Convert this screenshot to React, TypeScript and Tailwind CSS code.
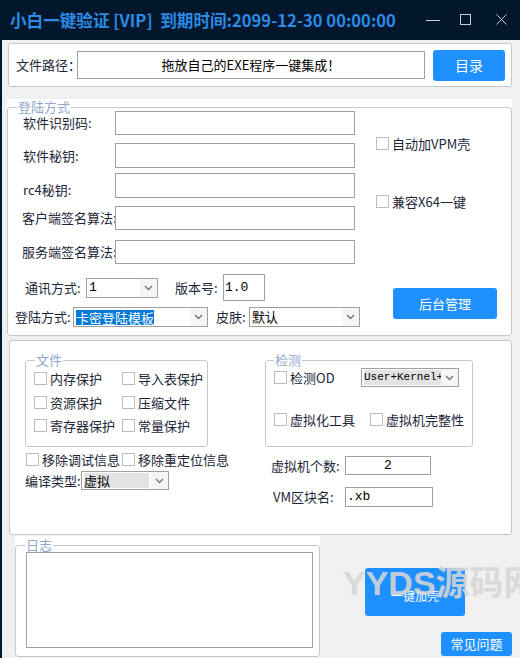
import type { ReactNode } from "react";

const cjk = { fontFamily: '"Noto Sans CJK SC", "Noto Sans", sans-serif' };
const mono = { fontFamily: '"Liberation Mono", "Noto Sans CJK SC", monospace' };

function Check({ label, className = "" }: { label: string; className?: string }) {
  return (
    <div className={`flex items-center ${className}`}>
      <span className="h-[13px] w-[13px] shrink-0 border border-[#bcbcbc] bg-white" />
      <span className="ml-[3px] whitespace-nowrap text-[13px] leading-[15px] text-[#1c2638]">{label}</span>
    </div>
  );
}

function Chevron() {
  return (
    <svg width="9" height="6" viewBox="0 0 9 6" fill="none">
      <path d="M1 1l3.5 3.5L8 1" stroke="#6b7280" strokeWidth="1.3" />
    </svg>
  );
}

function Select({ className = "", children }: { className?: string; children?: ReactNode }) {
  return (
    <div className={`flex border border-[#a0a0a0] bg-white ${className}`}>
      <div className="flex min-w-0 flex-1 items-center overflow-hidden px-[2px]">{children}</div>
      <div className="flex w-[17px] items-center justify-center bg-[#f5f5f5]">
        <Chevron />
      </div>
    </div>
  );
}

function Box({ className = "", children }: { className?: string; children?: ReactNode }) {
  return <div className={`border border-[#a0a0a0] bg-white ${className}`}>{children}</div>;
}

function Legend({ text, className = "" }: { text: string; className?: string }) {
  return (
    <span className={`absolute -top-[8px] bg-white px-[1px] text-[13px] leading-[14px] text-[#8fa7cc] ${className}`}>
      {text}
    </span>
  );
}

function Label({ text, className = "" }: { text: string; className?: string }) {
  return <span className={`shrink-0 whitespace-nowrap text-[13px] leading-[16px] text-[#1c2638] ${className}`}>{text}</span>;
}

export default function App() {
  return (
    <div className="flex h-[658px] w-[520px] flex-col overflow-hidden bg-[#f0f0f0]" style={cjk}>
      {/* title bar */}
      <header className="flex h-[40px] shrink-0 items-center bg-[#02172b] pl-[10px]">
        <span className="whitespace-pre text-[16.6px] font-bold leading-[20px] text-[#2b8be6]">
          小白一键验证 [VIP]  到期时间:2099-12-30 00:00:00
        </span>
        <div className="ml-auto flex items-center">
          <svg width="14" height="14" viewBox="0 0 14 14" className="mr-[20px]">
            <path d="M0 7.5h14" stroke="#c9ced6" strokeWidth="1" />
          </svg>
          <svg width="12" height="12" viewBox="0 0 12 12" className="mr-[24px]">
            <rect x="0.5" y="0.5" width="10" height="10" fill="none" stroke="#c9ced6" strokeWidth="1" />
          </svg>
          <svg width="12" height="12" viewBox="0 0 12 12" className="mr-[12px]">
            <path d="M0.5 0.5l10 10M10.5 0.5l-10 10" stroke="#c9ced6" strokeWidth="1" />
          </svg>
        </div>
      </header>

      <div className="relative flex-1 border-l-2 border-[#02172b]">
        {/* file path */}
        <div className="ml-[6px] mt-[3px] flex h-[44px] w-[504px] items-center rounded-[3px] border border-[#c8c8c8] bg-white">
          <Label text="文件路径：" className="w-[68px] pl-[7px]" />
          <Box className="flex h-[28px] w-[348px] items-center justify-center">
            <span className="text-[13px] text-black">拖放自己的EXE程序一键集成！</span>
          </Box>
          <button className="ml-[8px] h-[31px] w-[72px] rounded-[3px] bg-[#1e90ff] text-[14px] text-white">目录</button>
        </div>

        {/* login settings */}
        <div className="ml-[5px] mt-[12px] w-[505px] bg-white pt-[8px]">
          <div className="relative h-[229px] rounded-[3px] border border-[#c8c8c8]">
            <Legend text="登陆方式" className="left-[9px]" />
            <div className="flex">
              <div className="w-[347px] pt-[3px]">
                <div className="flex items-center">
                  <Label text="软件识别码:" className="w-[107px] pl-[15px]" />
                  <Box className="h-[24px] w-[240px]" />
                </div>
                <div className="mt-[8px] flex items-center">
                  <Label text="软件秘钥:" className="w-[107px] pl-[15px]" />
                  <Box className="h-[25px] w-[240px]" />
                </div>
                <div className="mt-[5px] flex items-center">
                  <Label text="rc4秘钥:" className="w-[107px] pl-[15px] pt-[8px]" />
                  <Box className="h-[25px] w-[240px]" />
                </div>
                <div className="mt-[8px] flex items-center">
                  <Label text="客户端签名算法:" className="w-[107px] pl-[14px]" />
                  <Box className="h-[24px] w-[240px]" />
                </div>
                <div className="mt-[10px] flex items-center">
                  <Label text="服务端签名算法:" className="w-[107px] pl-[14px]" />
                  <Box className="h-[24px] w-[240px]" />
                </div>
              </div>
              <div className="ml-[21px] pt-[28px]">
                <Check label="自动加VPM壳" />
                <Check label="兼容X64一键" className="mt-[43px]" />
              </div>
            </div>

            <div className="mt-[10px] flex">
              <div className="w-[352px]">
                <div className="flex h-[27px] items-center">
                  <Label text="通讯方式:" className="w-[78px] pl-[17px]" />
                  <Select className="h-[20px] w-[72px]">
                    <span className="text-[13px] leading-[16px] text-black" style={mono}>1</span>
                  </Select>
                  <Label text="版本号:" className="ml-[17px] w-[48px]" />
                  <Box className="flex h-[27px] w-[42px] items-center pl-[1px]">
                    <span className="text-[13px] text-black" style={mono}>1.0</span>
                  </Box>
                </div>
                <div className="mt-[6px] flex h-[20px] items-center">
                  <Label text="登陆方式:" className="w-[65px] pl-[7px]" />
                  <Select className="h-[20px] w-[135px]">
                    <span className="bg-[#0078d7] text-[13px] leading-[15px] text-white">卡密登陆模板</span>
                  </Select>
                  <Label text="皮肤:" className="ml-[8px] w-[33px]" />
                  <Select className="h-[20px] w-[111px]">
                    <span className="text-[13px] leading-[16px] text-black">默认</span>
                  </Select>
                </div>
              </div>
              <button className="ml-[33px] mt-[14px] h-[31px] w-[104px] rounded-[3px] bg-[#1e90ff] text-[13px] text-white">
                后台管理
              </button>
            </div>
          </div>
        </div>

        {/* protection options */}
        <div className="ml-[7px] mt-[4px] flex h-[195px] w-[503px] rounded-[3px] border border-[#c8c8c8] bg-white">
          <div className="ml-[15px] w-[240px] pt-[19px]">
            <div className="relative h-[87px] w-[183px] rounded-[3px] border border-[#c8c8c8] pl-[8px]">
              <Legend text="文件" className="left-[9px]" />
              <div className="mt-[11px] flex h-[13px] items-center">
                <Check label="内存保护" className="w-[88px]" />
                <Check label="导入表保护" />
              </div>
              <div className="mt-[11px] flex h-[13px] items-center">
                <Check label="资源保护" className="w-[88px]" />
                <Check label="压缩文件" />
              </div>
              <div className="mt-[10px] flex h-[13px] items-center">
                <Check label="寄存器保护" className="w-[88px]" />
                <Check label="常量保护" />
              </div>
            </div>
            <div className="ml-[1px] mt-[6px] flex h-[13px] items-center">
              <Check label="移除调试信息" className="w-[96px]" />
              <Check label="移除重定位信息" />
            </div>
            <div className="-ml-[15px] mt-[5px] flex h-[19px] items-center">
              <Label text="编译类型:" className="w-[71px] pl-[15px]" />
              <Select className="h-[19px] w-[88px]">
                <span className="w-[66px] bg-[#e3e3e3] text-[13px] leading-[15px] text-black">虚拟</span>
              </Select>
            </div>
          </div>

          <div className="w-[208px] pt-[19px]">
            <div className="relative h-[87px] rounded-[3px] border border-[#c8c8c8] pl-[8px]">
              <Legend text="检测" className="left-[8px]" />
              <div className="mt-[7px] flex h-[19px] items-center">
                <Check label="检测OD" className="w-[87px]" />
                <Select className="h-[19px] w-[98px]">
                  <span className="whitespace-nowrap bg-[#e3e3e3] text-[11px] leading-[15px] text-black" style={mono}>
                    User+Kernel+
                  </span>
                </Select>
              </div>
              <div className="mt-[25px] flex h-[14px] items-center">
                <Check label="虚拟化工具" className="w-[96px]" />
                <Check label="虚拟机完整性" />
              </div>
            </div>
            <div className="mt-[9px] flex h-[19px] items-center">
              <Label text="虚拟机个数:" className="w-[80px] pl-[6px]" />
              <Box className="flex h-[19px] w-[86px] items-center justify-center">
                <span className="text-[13px] text-black" style={mono}>2</span>
              </Box>
            </div>
            <div className="mt-[12px] flex h-[20px] items-center">
              <Label text="VM区块名:" className="w-[80px] pl-[8px]" />
              <Box className="flex h-[20px] w-[88px] items-center pl-[1px]">
                <span className="text-[13px] text-black" style={mono}>.xb</span>
              </Box>
            </div>
          </div>
        </div>

        {/* log + actions */}
        <div className="mt-[1px] flex">
          <div className="ml-[13px] w-[305px] bg-white pt-[9px]">
            <div className="relative h-[112px] rounded-[3px] border border-[#c8c8c8]">
              <Legend text="日志" className="left-[9px]" />
              <Box className="ml-[10px] mt-[6px] h-[96px] w-[287px]" />
            </div>
          </div>
          <div className="ml-[45px] flex w-[147px] flex-col">
            <button className="mt-[32px] h-[48px] w-[100px] rounded-[3px] bg-[#1e90ff] pt-[8px] text-[12px] text-white">
              一键加壳
            </button>
            <button className="ml-auto mt-[16px] h-[24px] w-[71px] rounded-[3px] bg-[#1e90ff] text-[13px] leading-[16px] text-white">
              常见问题
            </button>
          </div>
        </div>

        {/* watermark */}
        <span
          className="pointer-events-none absolute left-[341px] top-[523px] whitespace-nowrap text-[34px] font-bold leading-[40px] text-[#d6d6d6]/90"
          style={{ fontFamily: '"Liberation Sans", "Noto Sans CJK SC", sans-serif' }}
        >
          YYDS源码网
        </span>
      </div>
    </div>
  );
}
